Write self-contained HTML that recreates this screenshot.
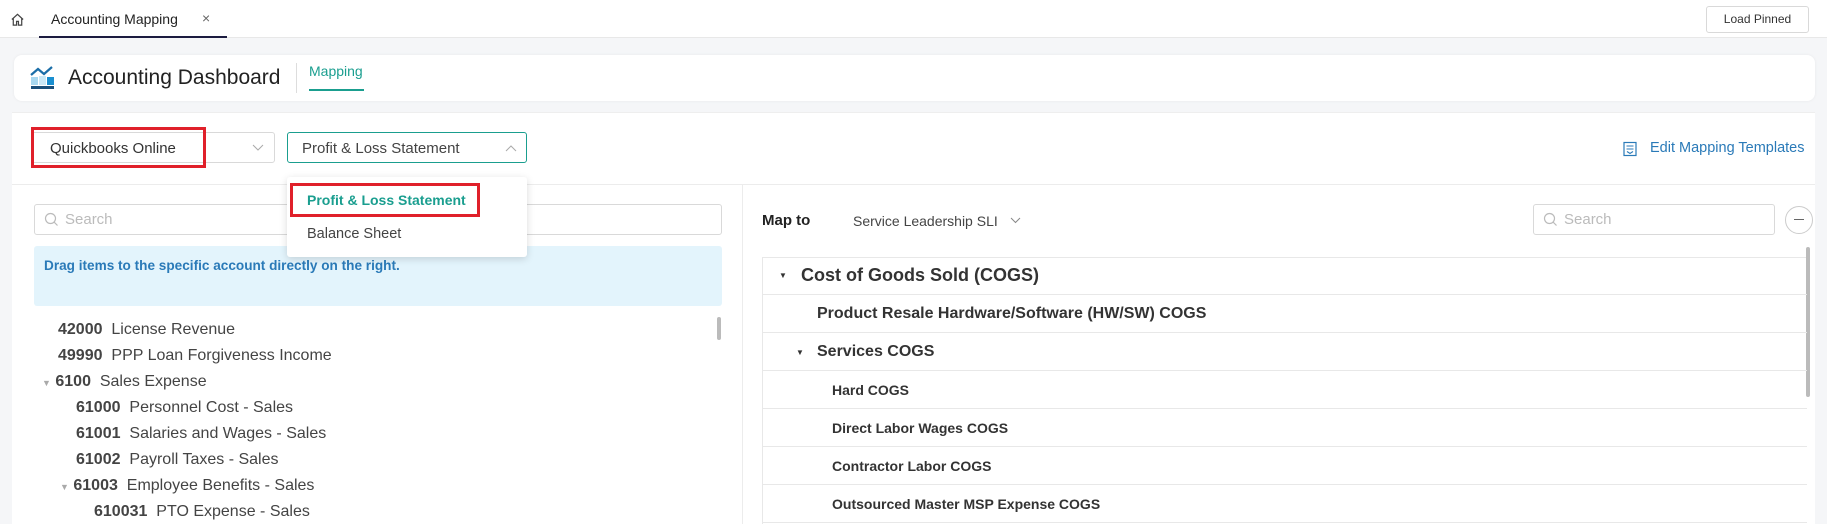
<!DOCTYPE html><html><head><meta charset="utf-8"><style>
*{box-sizing:border-box;margin:0;padding:0}
body{width:1827px;height:524px;overflow:hidden;background:#f5f6f8;font-family:"Liberation Sans",sans-serif;color:#333;position:relative}
.a{position:absolute}
.t{white-space:nowrap}
</style></head><body>
<div class="a" style="left:0;top:0;width:1827px;height:38px;background:#fff;border-bottom:1px solid #e8e8e8"></div>
<svg class="a" style="left:10px;top:12px" width="15" height="15" viewBox="0 0 16 16"><path d="M2 8L8 2.5 14 8M3.5 6.8V14h3.5v-4h2v4h3.5V6.8" fill="none" stroke="#444" stroke-width="1.3"/></svg>
<div class="a" style="left:39px;top:0;width:188px;height:38px;border-bottom:2px solid #1c1c40"></div>
<div class="a t" style="left:51px;top:11px;font-size:14px;color:#222">Accounting Mapping</div>
<div class="a t" style="left:202px;top:10px;font-size:14px;color:#666">×</div>
<div class="a" style="left:1706px;top:6px;width:103px;height:27px;border:1px solid #d9d9d9;border-radius:3px;background:#fff;font-size:12px;color:#333;text-align:center;line-height:25px">Load Pinned</div>

<div class="a" style="left:14px;top:55px;width:1801px;height:46px;background:#fff;border-radius:8px;box-shadow:0 0 3px rgba(0,0,0,.06)"></div>
<svg class="a" style="left:30px;top:65px" width="26" height="25" viewBox="0 0 26 25"><rect x="1" y="12" width="7" height="8" fill="#a8d8f0"/><rect x="9" y="11" width="7" height="9" fill="#c9e8f7"/><rect x="17" y="12" width="7" height="8" fill="#1a8fd0"/><rect x="1" y="21" width="23" height="3" fill="#1a4f7a"/><path d="M1 10L8 4l6 5 8-7" fill="none" stroke="#1b6ea8" stroke-width="2.2"/></svg>
<div class="a t" style="left:68px;top:66px;font-size:21px;color:#222">Accounting Dashboard</div>
<div class="a" style="left:296px;top:63px;width:1px;height:30px;background:#ddd"></div>
<div class="a t" style="left:309px;top:63px;font-size:14px;color:#1a9e8f">Mapping</div>
<div class="a" style="left:309px;top:89px;width:55px;height:2px;background:#1a9e8f"></div>

<div class="a" style="left:12px;top:112px;width:1803px;height:412px;background:#fff;border-top:1px solid #eee"></div>
<div class="a" style="left:12px;top:184px;width:1803px;height:1px;background:#ececec"></div>
<div class="a" style="left:742px;top:184px;width:1px;height:340px;background:#ececec"></div>

<div class="a" style="left:31px;top:132px;width:244px;height:31px;border:1px solid #d9d9d9;border-radius:3px"></div>
<div class="a t" style="left:50px;top:140px;font-size:15px;color:#333">Quickbooks Online</div>
<svg class="a" style="left:252px;top:144px" width="12" height="8"><path d="M1 1l5 5 5-5" fill="none" stroke="#aaa"/></svg>
<div class="a" style="left:31px;top:127px;width:175px;height:41px;border:3px solid #e0202a"></div>

<div class="a" style="left:287px;top:132px;width:240px;height:31px;border:1px solid #1a9e8f;border-radius:3px"></div>
<div class="a t" style="left:302px;top:140px;font-size:15px;color:#444">Profit &amp; Loss Statement</div>
<svg class="a" style="left:505px;top:144px" width="12" height="8"><path d="M1 7l5-5 5 5" fill="none" stroke="#aaa"/></svg>

<svg class="a" style="left:1622px;top:141px" width="16" height="16" viewBox="0 0 16 16"><rect x="2" y="1.5" width="12" height="13" fill="none" stroke="#2a7ab8" stroke-width="1.2"/><path d="M4.5 5h7M4.5 8h7M5 10.5l3 2 3-2" fill="none" stroke="#2a7ab8" stroke-width="1.1"/></svg>
<div class="a t" style="left:1650px;top:140px;font-size:14.5px;color:#2a7ab8">Edit Mapping Templates</div>

<div class="a" style="left:34px;top:204px;width:688px;height:31px;border:1px solid #d9d9d9;border-radius:3px"></div>
<svg class="a" style="left:44px;top:212px" width="15" height="15"><circle cx="6.5" cy="6.5" r="5" fill="none" stroke="#bbb" stroke-width="1.2"/><path d="M10 10l3.5 3.5" stroke="#bbb" stroke-width="1.2"/></svg>
<div class="a t" style="left:65px;top:211px;font-size:15px;color:#bbb">Search</div>
<div class="a" style="left:34px;top:246px;width:688px;height:60px;background:#e3f4fc;border-radius:3px"></div>
<div class="a t" style="left:44px;top:258px;font-size:13.6px;color:#2a7ab8;font-weight:bold">Drag items to the specific account directly on the right.</div>

<div class="a" style="left:287px;top:177px;width:240px;height:80px;background:#fff;border-radius:3px;box-shadow:0 2px 8px rgba(0,0,0,.15)"></div>
<div class="a" style="left:290px;top:183px;width:190px;height:34px;border:3px solid #e0202a"></div>
<div class="a t" style="left:307px;top:192px;font-size:14px;color:#1a9e8f;font-weight:bold">Profit &amp; Loss Statement</div>
<div class="a t" style="left:307px;top:226px;font-size:14.5px;color:#444">Balance Sheet</div>

<div class="a" style="left:717px;top:317px;width:4px;height:23px;background:#bbb;border-radius:2px"></div>
<div style="font-size:16px;color:#444">
<div class="a t" style="left:58px;top:321px"><b>42000</b>&nbsp; License Revenue</div>
<div class="a t" style="left:58px;top:347px"><b>49990</b>&nbsp; PPP Loan Forgiveness Income</div>
<div class="a t" style="left:42px;top:373px"><span style="font-size:9px;color:#aaa">▼</span> <b>6100</b>&nbsp; Sales Expense</div>
<div class="a t" style="left:76px;top:399px"><b>61000</b>&nbsp; Personnel Cost - Sales</div>
<div class="a t" style="left:76px;top:425px"><b>61001</b>&nbsp; Salaries and Wages - Sales</div>
<div class="a t" style="left:76px;top:451px"><b>61002</b>&nbsp; Payroll Taxes - Sales</div>
<div class="a t" style="left:60px;top:477px"><span style="font-size:9px;color:#aaa">▼</span> <b>61003</b>&nbsp; Employee Benefits - Sales</div>
<div class="a t" style="left:94px;top:503px"><b>610031</b>&nbsp; PTO Expense - Sales</div>
</div>

<div class="a t" style="left:762px;top:212px;font-size:15px;color:#222;font-weight:bold">Map to</div>
<div class="a t" style="left:853px;top:213px;font-size:14px;color:#444">Service Leadership SLI</div>
<svg class="a" style="left:1010px;top:217px" width="11" height="7"><path d="M1 1l4.5 4.5L10 1" fill="none" stroke="#888"/></svg>
<div class="a" style="left:1533px;top:204px;width:242px;height:31px;border:1px solid #d9d9d9;border-radius:3px"></div>
<svg class="a" style="left:1543px;top:212px" width="15" height="15"><circle cx="6.5" cy="6.5" r="5" fill="none" stroke="#bbb" stroke-width="1.2"/><path d="M10 10l3.5 3.5" stroke="#bbb" stroke-width="1.2"/></svg>
<div class="a t" style="left:1564px;top:211px;font-size:15px;color:#bbb">Search</div>
<div class="a" style="left:1785px;top:206px;width:28px;height:28px;border:1px solid #ccc;border-radius:50%"></div>
<div class="a" style="left:1794px;top:219px;width:10px;height:1px;background:#666"></div>

<div class="a" style="left:762px;top:257px;width:1045px;height:267px;border-left:1px solid #e8e8e8;border-top:1px solid #e8e8e8"></div>
<div class="a" style="left:1806px;top:247px;width:4px;height:150px;background:#bbb;border-radius:2px"></div>
<div class="a" style="left:763px;top:294px;width:1044px;height:1px;background:#e8e8e8"></div>
<div class="a" style="left:763px;top:332px;width:1044px;height:1px;background:#e8e8e8"></div>
<div class="a" style="left:763px;top:370px;width:1044px;height:1px;background:#e8e8e8"></div>
<div class="a" style="left:763px;top:408px;width:1044px;height:1px;background:#e8e8e8"></div>
<div class="a" style="left:763px;top:446px;width:1044px;height:1px;background:#e8e8e8"></div>
<div class="a" style="left:763px;top:484px;width:1044px;height:1px;background:#e8e8e8"></div>
<div class="a" style="left:763px;top:522px;width:1044px;height:1px;background:#e8e8e8"></div>
<div class="a t" style="left:779px;top:271px;font-size:8px;color:#333">▼</div>
<div class="a t" style="left:801px;top:265px;font-size:18px;color:#333;font-weight:bold">Cost of Goods Sold (COGS)</div>
<div class="a t" style="left:817px;top:305px;font-size:16px;color:#333;font-weight:bold">Product Resale Hardware/Software (HW/SW) COGS</div>
<div class="a t" style="left:796px;top:348px;font-size:8px;color:#333">▼</div>
<div class="a t" style="left:817px;top:343px;font-size:16px;color:#333;font-weight:bold">Services COGS</div>
<div class="a t" style="left:832px;top:382px;font-size:14px;color:#333;font-weight:bold">Hard COGS</div>
<div class="a t" style="left:832px;top:420px;font-size:14px;color:#333;font-weight:bold">Direct Labor Wages COGS</div>
<div class="a t" style="left:832px;top:458px;font-size:14px;color:#333;font-weight:bold">Contractor Labor COGS</div>
<div class="a t" style="left:832px;top:496px;font-size:14px;color:#333;font-weight:bold">Outsourced Master MSP Expense COGS</div>
</body></html>
